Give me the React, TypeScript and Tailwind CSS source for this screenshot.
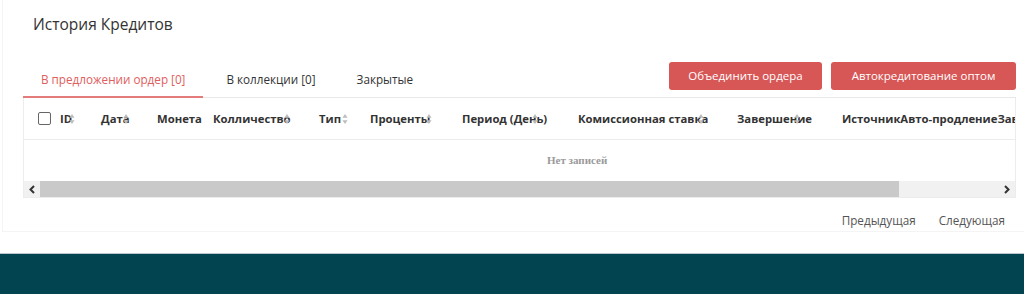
import React from "react";

function SortIcon({ left }: { left: number }) {
  return (
    <svg
      className="absolute top-1/2 -translate-y-1/2"
      style={{ left }}
      width="6"
      height="11"
      viewBox="0 0 6 11"
    >
      <path d="M3 0.5 L5.6 4.2 L0.4 4.2 Z" fill="#bdbdbd" />
      <path d="M3 10.5 L5.6 6.8 L0.4 6.8 Z" fill="#bdbdbd" />
    </svg>
  );
}

type Col = { label: string; w: number; icon?: number };

const cols: Col[] = [
  { label: "ID", w: 41, icon: 9 },
  { label: "Дата", w: 56, icon: 22 },
  { label: "Монета", w: 56 },
  { label: "Колличество", w: 106, icon: 71 },
  { label: "Тип", w: 51, icon: 23 },
  { label: "Проценты", w: 92, icon: 56 },
  { label: "Период (День)", w: 116, icon: 70 },
  { label: "Комиссионная ставка", w: 159, icon: 120 },
  { label: "Завершение", w: 105, icon: 57 },
];

export default function App() {
  return (
    <div
      className="w-full h-[294px] bg-white flex flex-col overflow-hidden text-[#333]"
      style={{ fontFamily: '"Open Sans", "Noto Sans", sans-serif' }}
    >
      <div className="ml-[2px] h-[232px] border-l border-b border-[#f4f4f4] pl-[20px] pr-[8px] pt-[12px] flex flex-col">
        <div className="h-[24px] leading-[24px] text-[15.5px] pl-[10px] text-[#333]">
          История Кредитов
        </div>

        <div className="mt-[24px] h-[38px] flex justify-between border-b border-[#e8e8e8]">
          <div className="flex items-end gap-[5px] text-[11.7px]">
            <div className="px-[18px] pb-[9px] leading-[16px] text-[#e05d5d] border-b-2 border-[#e47c7c] -mb-px">
              В предложении ордер [0]
            </div>
            <div className="px-[18px] pb-[10px] leading-[16px] text-[#333]">
              В коллекции [0]
            </div>
            <div className="px-[18px] pb-[10px] leading-[16px] text-[#333]">
              Закрытые
            </div>
          </div>
          <div className="flex items-start gap-[9px] pt-[2px]">
            <button className="h-[28px] w-[153px] rounded-[3px] bg-[#d75656] text-white text-[11.5px] leading-[28px] text-center">
              Объединить ордера
            </button>
            <button className="h-[28px] w-[185px] rounded-[3px] bg-[#d75656] text-white text-[11.5px] leading-[28px] text-center">
              Автокредитование оптом
            </button>
          </div>
        </div>

        <div className="border-l border-r border-b border-[#ececec]">
          <div className="h-[42px] flex items-center border-b border-[#ececec] text-[11.3px] font-bold text-[#333] whitespace-nowrap overflow-hidden">
            <div className="w-[36px] shrink-0 pl-[14px] flex items-center">
              <div className="w-[13px] h-[13px] border-[1.5px] border-[#666] rounded-[2px] bg-white" />
            </div>
            {cols.map((c) => (
              <div
                key={c.label}
                className="relative shrink-0 leading-[16px]"
                style={{ width: c.w }}
              >
                {c.label}
                {c.icon !== undefined && <SortIcon left={c.icon} />}
              </div>
            ))}
            <div className="shrink-0 leading-[16px]">ИсточникАвто-продлениеЗавершение</div>
          </div>

          <div className="h-[41px] flex items-center">
            <span
              className="pl-[523px] text-[11px] font-bold text-[#9a9a9a]"
              style={{ fontFamily: '"Liberation Serif", "DejaVu Serif", serif' }}
            >
              Нет записей
            </span>
          </div>

          <div className="h-[16px] flex bg-[#f1f1f1]">
            <div className="w-[16px] h-full flex items-center justify-center bg-[#f1f1f1]">
              <svg width="8" height="9" viewBox="0 0 8 9">
                <path d="M6 1 L2.5 4.5 L6 8" stroke="#333" strokeWidth="2" fill="none" />
              </svg>
            </div>
            <div className="w-[859px] h-full bg-[#c9c9c9]" />
            <div className="flex-1" />
            <div className="w-[16px] h-full flex items-center justify-center">
              <svg width="8" height="9" viewBox="0 0 8 9">
                <path d="M2 1 L5.5 4.5 L2 8" stroke="#333" strokeWidth="2" fill="none" />
              </svg>
            </div>
          </div>
        </div>

        <div className="mt-[14px] flex justify-end gap-[23px] pr-[11px] text-[11.7px] leading-[16px] text-[#555]">
          <span>Предыдущая</span>
          <span>Следующая</span>
        </div>
      </div>

      <div className="mt-[21px] h-[41px] border-t border-[#b9c7ca] bg-[#02444f]" />
    </div>
  );
}
